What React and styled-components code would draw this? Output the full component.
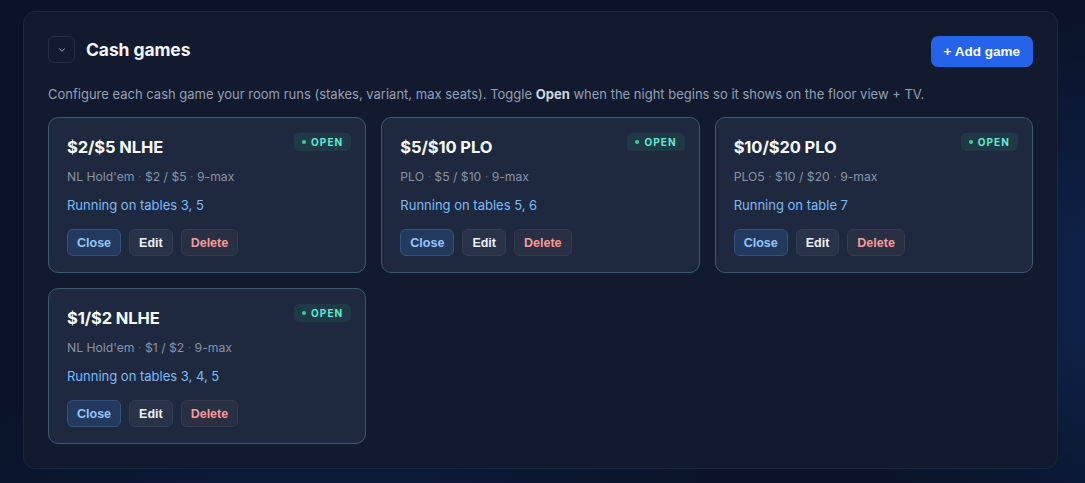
import React from "react";
import styled, { createGlobalStyle } from "styled-components";

const Global = createGlobalStyle`
  html, body { margin: 0; padding: 0; }
  body {
    background: #0a1428;
    font-family: Inter, "Noto Sans", "Liberation Sans", sans-serif;
    -webkit-font-smoothing: antialiased;
  }
`;

const Page = styled.div`
  min-height: 483px;
  box-sizing: border-box;
  padding: 11px 27px 14px 23px;
  background:
    radial-gradient(ellipse 500px 400px at 105% 60%, rgba(20, 50, 110, 0.55), transparent 70%),
    radial-gradient(ellipse 600px 300px at 30% 110%, rgba(20, 45, 100, 0.35), transparent 70%),
    #0a1328;
`;

const Panel = styled.section`
  background: #111a2e;
  border: 1px solid #1c2639;
  border-radius: 12px;
  padding: 24px;
`;

const Header = styled.div`
  display: flex;
  align-items: flex-start;
  justify-content: space-between;
`;

const TitleGroup = styled.div`
  display: flex;
  align-items: center;
  gap: 11px;
  height: 27px;
`;

const ToggleButton = styled.button`
  width: 27px;
  height: 27px;
  box-sizing: border-box;
  border: 1px solid #242f44;
  border-radius: 6px;
  background: transparent;
  display: flex;
  align-items: center;
  justify-content: center;
  padding: 0;
  color: #8b96a8;
`;

const Title = styled.h2`
  margin: 0;
  font-size: 17.5px;
  font-weight: 700;
  color: #f1f5f9;
  line-height: 24px;
  letter-spacing: -0.1px;
`;

const PrimaryButton = styled.button`
  height: 31px;
  padding: 0 13px;
  border: none;
  border-radius: 7px;
  background: #2563eb;
  color: #fff;
  font-family: "Liberation Sans", Arial, sans-serif;
  font-size: 13.5px;
  font-weight: 700;
`;

const Description = styled.p`
  margin: 17px 0 13px;
  font-size: 13px;
  line-height: 20px;
  color: #94a0b3;
  b { color: #cbd5e1; font-weight: 700; }
`;

const Grid = styled.div`
  display: grid;
  grid-template-columns: repeat(3, 1fr);
  gap: 15px;
`;

const Card = styled.div`
  background: #1e293f;
  border: 1px solid #3b5a6d;
  border-radius: 10px;
  padding: 15px 14px 16px 18px;
`;

const CardTop = styled.div`
  display: flex;
  justify-content: space-between;
  align-items: flex-start;
  padding-top: 2px;
`;

const CardTitle = styled.h3`
  margin: 0;
  font-size: 16.5px;
  font-weight: 700;
  line-height: 24px;
  color: #f8fafc;
  letter-spacing: -0.1px;
`;

const Badge = styled.span`
  display: inline-flex;
  align-items: center;
  gap: 5px;
  height: 18px;
  padding: 0 8px;
  margin-top: -2px;
  border-radius: 5px;
  background: #1f3a46;
  color: #5eead4;
  font-size: 10px;
  font-weight: 700;
  letter-spacing: 1.1px;
  &::before {
    content: "";
    width: 4px;
    height: 4px;
    border-radius: 50%;
    background: #34d399;
  }
`;

const Meta = styled.div`
  margin-top: 8px;
  font-size: 12.2px;
  line-height: 20px;
  color: #8893a5;
`;

const Sep = styled.span`
  color: #5d687b;
`;

const Running = styled.div`
  margin-top: 8px;
  font-size: 13px;
  line-height: 20px;
  color: #7dbbf5;
`;

const Actions = styled.div`
  display: flex;
  gap: 8px;
  margin-top: 14px;
`;

const variants = {
  close: "background:#233a5e;border-color:#34527c;color:#93c5fd;",
  edit: "background:#28334a;border-color:#323d52;color:#eef2f7;",
  delete: "background:#2a3044;border-color:#343b50;color:#f59a9a;",
};

const ActionButton = styled.button`
  height: 27px;
  box-sizing: border-box;
  padding: 0 9px;
  border: 1px solid;
  border-radius: 6px;
  font-family: "Liberation Sans", Arial, sans-serif;
  font-size: 12.5px;
  font-weight: 700;
  ${(p) => variants[p.$variant]}
`;

const games = [
  { name: "$2/$5 NLHE", meta: ["NL Hold'em", "$2 / $5", "9-max"], running: "Running on tables 3, 5" },
  { name: "$5/$10 PLO", meta: ["PLO", "$5 / $10", "9-max"], running: "Running on tables 5, 6" },
  { name: "$10/$20 PLO", meta: ["PLO5", "$10 / $20", "9-max"], running: "Running on table 7" },
  { name: "$1/$2 NLHE", meta: ["NL Hold'em", "$1 / $2", "9-max"], running: "Running on tables 3, 4, 5" },
];

export default function App() {
  return (
    <Page>
      <Global />
      <Panel>
        <Header>
          <TitleGroup>
            <ToggleButton aria-label="Collapse">
              <svg width="10" height="10" viewBox="0 0 24 24" fill="none" stroke="currentColor" strokeWidth="2.5" strokeLinecap="round" strokeLinejoin="round">
                <path d="M6 9l6 6 6-6" />
              </svg>
            </ToggleButton>
            <Title>Cash games</Title>
          </TitleGroup>
          <PrimaryButton>+ Add game</PrimaryButton>
        </Header>
        <Description>
          Configure each cash game your room runs (stakes, variant, max seats). Toggle <b>Open</b> when the night begins so it shows on the floor view + TV.
        </Description>
        <Grid>
          {games.map((g) => (
            <Card key={g.name}>
              <CardTop>
                <CardTitle>{g.name}</CardTitle>
                <Badge>OPEN</Badge>
              </CardTop>
              <Meta>
                {g.meta.map((m, i) => (
                  <React.Fragment key={i}>
                    {i > 0 && <Sep> · </Sep>}
                    {m}
                  </React.Fragment>
                ))}
              </Meta>
              <Running>{g.running}</Running>
              <Actions>
                <ActionButton $variant="close">Close</ActionButton>
                <ActionButton $variant="edit">Edit</ActionButton>
                <ActionButton $variant="delete">Delete</ActionButton>
              </Actions>
            </Card>
          ))}
        </Grid>
      </Panel>
    </Page>
  );
}
